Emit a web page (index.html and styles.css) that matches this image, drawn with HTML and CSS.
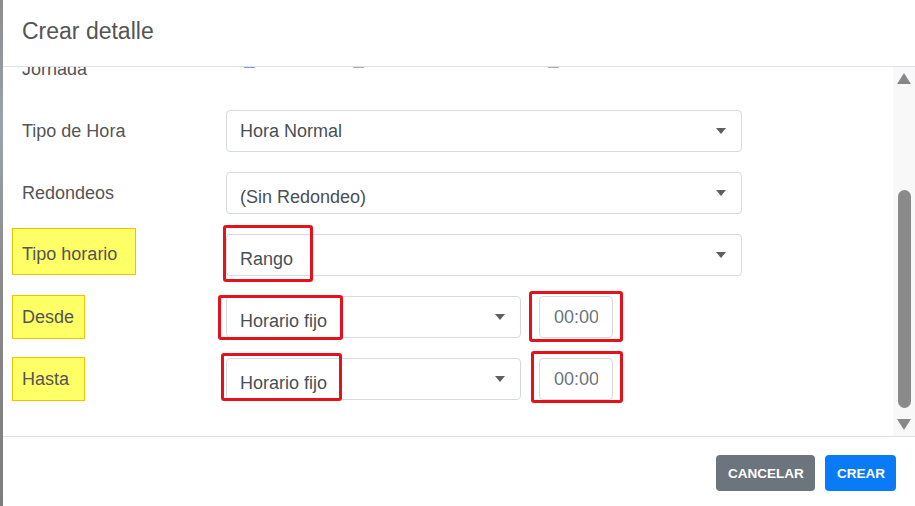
FILE: index.html
```html
<!DOCTYPE html>
<html lang="es">
<head>
  <meta charset="UTF-8">
  <title>Crear detalle</title>
  <link rel="stylesheet" href="styles.css">
</head>
<body>

  <div class="modal">
    <div class="modal-header">
      <h5>Crear detalle</h5>
    </div>

    <div class="modal-body">
      <div class="form">
        <div class="rows">

          <div class="row">
            <div class="label-cell">Jornada</div>
            <div class="checks">
              <span class="chk chk-on chk-1"></span>
              <span class="chk chk-2"></span>
              <span class="chk chk-3"></span>
            </div>
          </div>

          <div class="row">
            <div class="label-cell">Tipo de Hora</div>
            <div class="field">
              <div class="select select-full">
                <span class="select-value">Hora Normal</span>
                <span class="caret"></span>
              </div>
            </div>
          </div>

          <div class="row">
            <div class="label-cell">Redondeos</div>
            <div class="field">
              <div class="select select-full">
                <span class="select-value low">(Sin Redondeo)</span>
                <span class="caret"></span>
              </div>
            </div>
          </div>

          <div class="row">
            <div class="label-cell"><span class="hl hl-wide">Tipo horario</span></div>
            <div class="field">
              <div class="select select-full">
                <span class="select-value low">Rango</span>
                <span class="caret"></span>
              </div>
              <span class="mark mark-rango"></span>
            </div>
          </div>

          <div class="row">
            <div class="label-cell"><span class="hl hl-short">Desde</span></div>
            <div class="field">
              <div class="select select-half">
                <span class="select-value low">Horario fijo</span>
                <span class="caret"></span>
              </div>
              <span class="mark mark-desde"></span>
            </div>
            <div class="field">
              <div class="time"><span class="time-value">00:00</span></div>
              <span class="mark mark-t1"></span>
            </div>
          </div>

          <div class="row">
            <div class="label-cell"><span class="hl hl-short">Hasta</span></div>
            <div class="field">
              <div class="select select-half">
                <span class="select-value low">Horario fijo</span>
                <span class="caret"></span>
              </div>
              <span class="mark mark-hasta"></span>
            </div>
            <div class="field">
              <div class="time"><span class="time-value">00:00</span></div>
              <span class="mark mark-t2"></span>
            </div>
          </div>

        </div>
      </div>

      <div class="scrollbar">
        <span class="arrow-up"></span>
        <span class="thumb"></span>
        <span class="arrow-down"></span>
      </div>
    </div>

    <div class="modal-footer">
      <button class="btn btn-cancel">Cancelar</button>
      <button class="btn btn-create">Crear</button>
    </div>
  </div>

</body>
</html>
```

FILE: styles.css
```css
body {
  margin: 0;
  padding: 0;
  background: linear-gradient(#8d8d8d, #9aa3ad 25%, #8a8a8a 55%, #7d7d7d);
  font-family: 'Liberation Sans', Arial, sans-serif;
  color: #555;
}

.modal {
  margin-left: 3px;
  width: 912px;
  height: 506px;
  background: #fff;
  display: flex;
  flex-direction: column;
}

.modal-header {
  height: 67px;
  box-sizing: border-box;
  border-bottom: 1px solid #dee2e6;
  padding: 0 0 4px 19px;
  display: flex;
  align-items: center;
  flex: none;
}

.modal-header h5 {
  margin: 0;
  font-size: 23px;
  font-weight: normal;
  color: #555;
}

.modal-body {
  height: 369px;
  display: flex;
  overflow: hidden;
  flex: none;
}

.form {
  flex: 1;
  padding-left: 19px;
  overflow: hidden;
}

.rows {
  margin-top: -19px;
}

.row {
  display: flex;
  align-items: center;
  height: 42px;
  margin-bottom: 20px;
}

.label-cell {
  width: 204px;
  flex: none;
  font-size: 18px;
  display: flex;
  align-items: center;
}

/* yellow highlight on labels */
.hl {
  box-sizing: border-box;
  margin-left: -10px;
  padding-left: 9px;
  background: #ffff66;
  border: 1px solid #f2c200;
  display: flex;
  align-items: center;
  color: #555;
}

.hl-wide {
  width: 124px;
  height: 47px;
  margin-bottom: 7px;
  padding-top: 6px;
}

.hl-short {
  width: 73px;
  height: 44px;
}

.checks {
  display: flex;
  align-self: flex-start;
  padding-top: 7px;
}

.chk {
  width: 13px;
  height: 13px;
  box-sizing: border-box;
  border: 1px solid #aaa;
  border-radius: 2px;
}

.chk-on {
  border-color: #6aa7e2;
  background: #6aa7e2;
}

.chk-1 { margin-left: 17px; }
.chk-2 { margin-left: 96px; }
.chk-3 { margin-left: 182px; }

.field {
  position: relative;
}

.field + .field {
  margin-left: 18px;
}

.select {
  box-sizing: border-box;
  height: 42px;
  border: 1px solid #d6dadf;
  border-radius: 4px;
  padding: 0 15px 0 13px;
  display: flex;
  align-items: center;
  justify-content: space-between;
  font-size: 18px;
  color: #495057;
}

.select-full { width: 516px; }
.select-half { width: 295px; }

.select-value.low {
  margin-top: 8px;
}

.caret {
  width: 0;
  height: 0;
  border-left: 5px solid transparent;
  border-right: 5px solid transparent;
  border-top: 6px solid #5f5f5f;
}

.time {
  box-sizing: border-box;
  width: 74px;
  height: 42px;
  border: 1px solid #d6dadf;
  border-radius: 4px;
  padding-left: 14px;
  display: flex;
  align-items: center;
  font-size: 18px;
  color: #6c757d;
}

.time-value {
  width: 44px;
  overflow: hidden;
  white-space: nowrap;
}

/* red annotation boxes */
.mark {
  position: absolute;
  box-sizing: border-box;
  border: 3px solid #e5121c;
  border-radius: 3px;
  pointer-events: none;
}

.mark-rango { left: -3px; top: -9px; width: 90px; height: 57px; }
.mark-desde { left: -8px; top: -1px; width: 125px; height: 45px; }
.mark-hasta { left: -5px; top: -5px; width: 121px; height: 48px; }
.mark-t1 { left: -10px; top: -5px; width: 94px; height: 51px; }
.mark-t2 { left: -8px; top: -7px; width: 92px; height: 52px; }

.scrollbar {
  width: 22px;
  flex: none;
  background: #f8f8f8;
  display: flex;
  flex-direction: column;
  align-items: center;
  padding-top: 6px;
}

.arrow-up {
  width: 0;
  height: 0;
  border-left: 7px solid transparent;
  border-right: 7px solid transparent;
  border-bottom: 11px solid #888;
}

.thumb {
  width: 13px;
  height: 218px;
  margin-top: 106px;
  background: #8a8a8a;
  border-radius: 7px;
}

.arrow-down {
  margin-top: 11px;
  width: 0;
  height: 0;
  border-left: 7px solid transparent;
  border-right: 7px solid transparent;
  border-top: 11px solid #888;
}

.modal-footer {
  flex: 1;
  border-top: 1px solid #dee2e6;
  display: flex;
  justify-content: flex-end;
  align-items: flex-start;
  gap: 10px;
  padding: 18px 19px 0 0;
}

.btn {
  height: 36px;
  border: none;
  border-radius: 4px;
  padding: 0 12px;
  font-family: 'Liberation Sans', Arial, sans-serif;
  font-size: 13.5px;
  font-weight: bold;
  text-transform: uppercase;
  color: #fff;
}

.btn-cancel {
  width: 99px;
  background-color: #6c757d;
}

.btn-create {
  width: 71px;
  background-color: #0a7bf7;
}
```
